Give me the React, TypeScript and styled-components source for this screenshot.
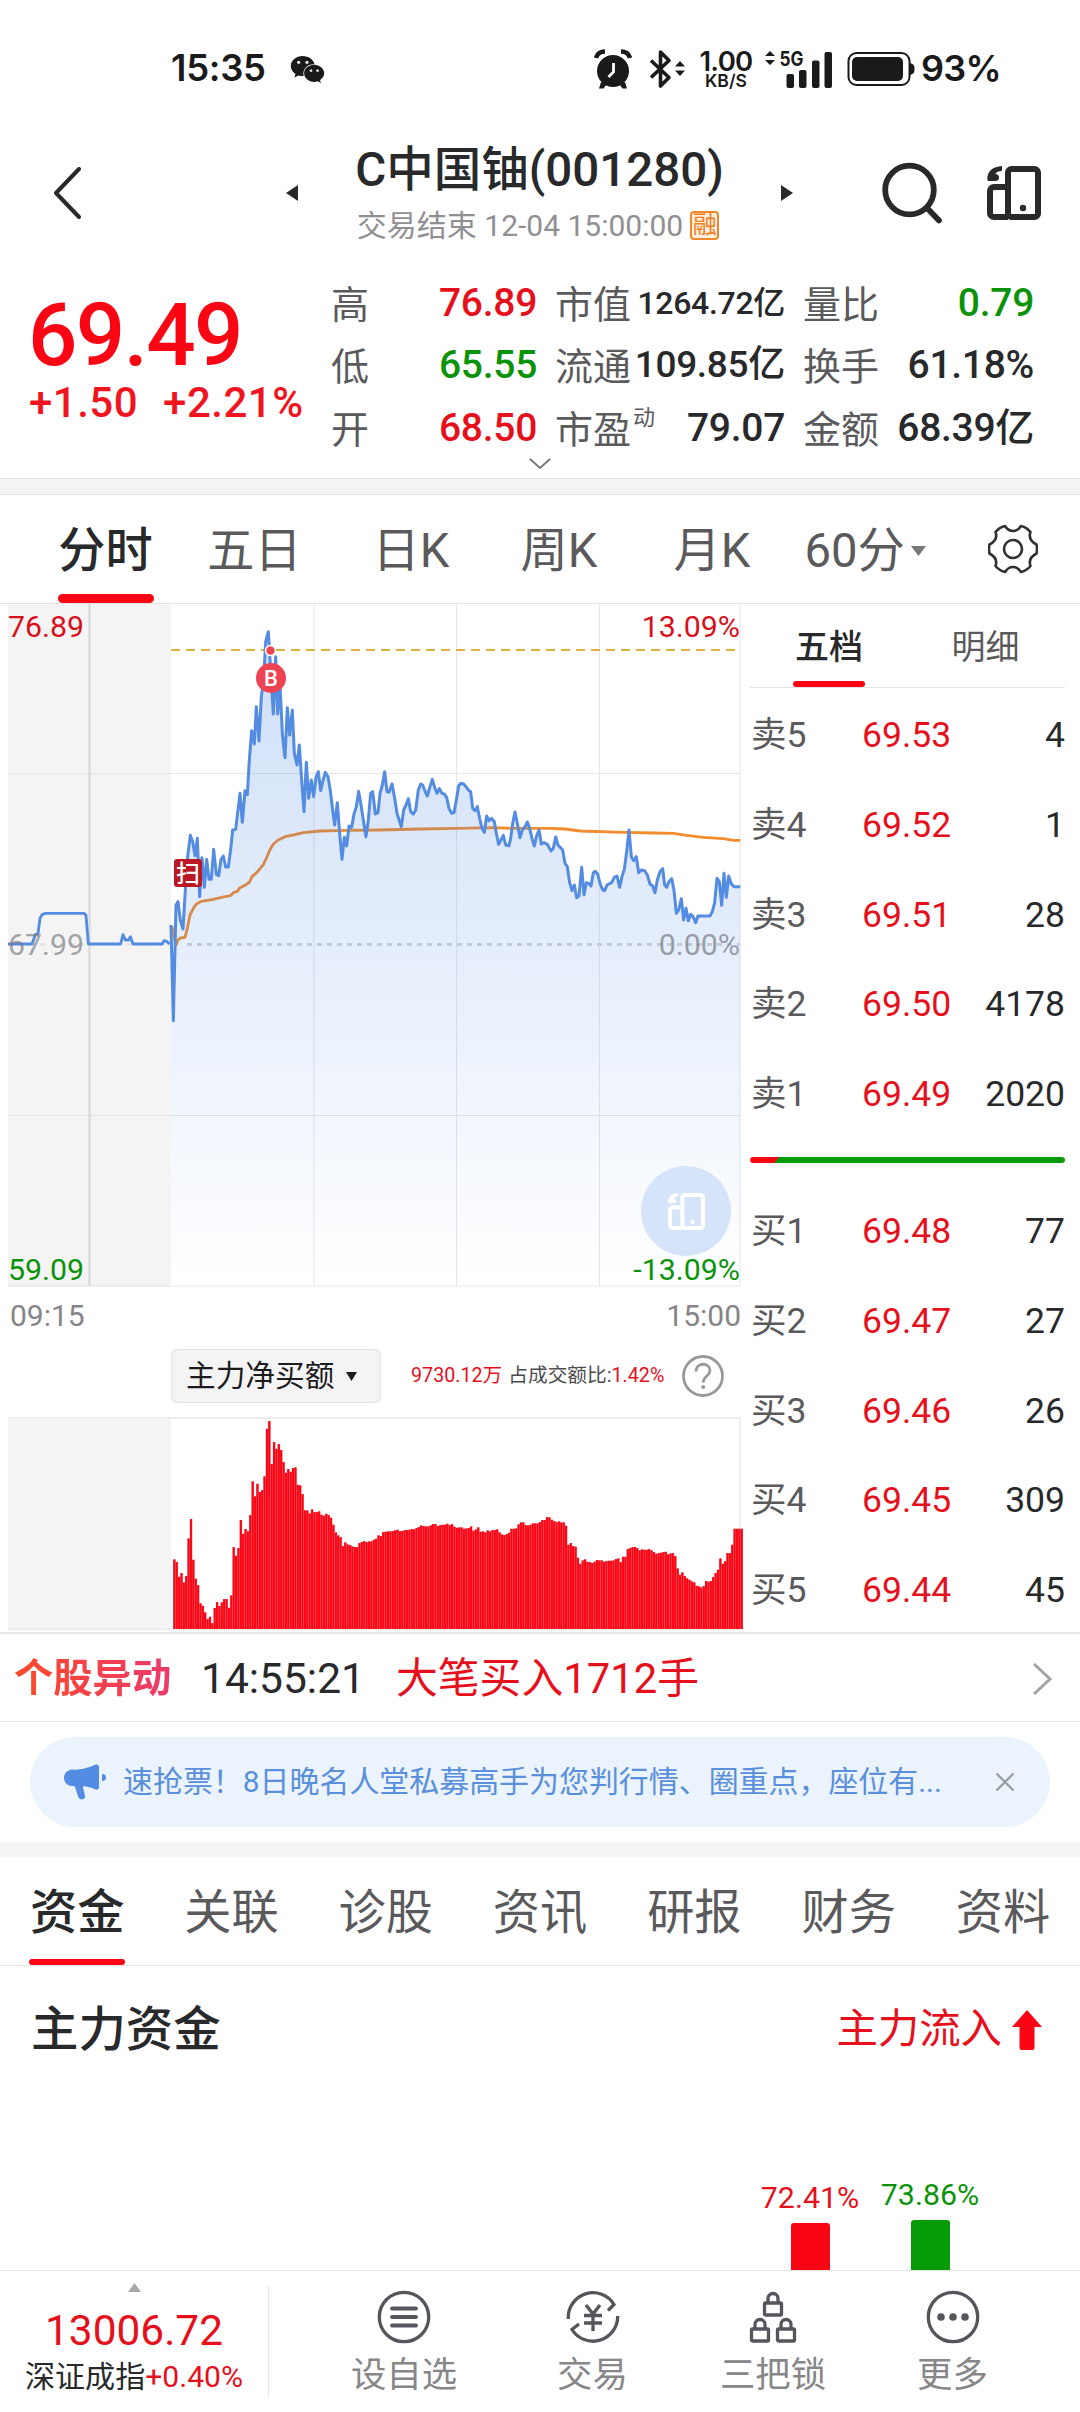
import React from 'react';
import styled, { createGlobalStyle } from 'styled-components';
import { FaWeixin } from 'react-icons/fa';

const RED = '#e60f1c';
const HOT = '#fa0513';
const GREEN = '#0a930a';
const INK = '#28292b';
const GRAY = '#5a5a5c';
const LINE = '#e4e4e6';

const GlobalStyle = createGlobalStyle`
  * { box-sizing: border-box; }
  body { margin: 0; background: #fff; }
`;

const Page = styled.main`
  display: flex;
  flex-direction: column;
  width: 1080px;
  height: 2412px;
  overflow: hidden;
  background: #fff;
  color: ${INK};
  font-family: Roboto, 'Noto Sans CJK SC', sans-serif;
  line-height: 1.2;
  white-space: nowrap;
  svg { display: block; flex: none; }
`;

/* ---------- status bar ---------- */
const StatusBar = styled.header`
  display: flex;
  align-items: center;
  height: 138px;
  padding: 0 80px 0 171px;
  color: #1a1a1a;
  font-family: Inter, Roboto, sans-serif;
  font-weight: 600;
`;
const Clock = styled.span`
  width: 119px;
  font-size: 36.5px;
  letter-spacing: -0.3px;
`;
const StatusIcons = styled.div`
  display: flex;
  align-items: center;
  margin-left: auto;
`;
const NetSpeed = styled.div`
  display: flex;
  flex-direction: column;
  align-items: center;
  width: 56px;
  margin: 0 11px 0 12px;
`;
const SpeedValue = styled.span`
  font-size: 27.5px;
  line-height: 22px;
  letter-spacing: -0.7px;
`;
const SpeedUnit = styled.span`
  font-size: 17.5px;
  line-height: 17px;
  letter-spacing: 0;
`;
const BatteryText = styled.span`
  margin-left: 6px;
  width: 79px;
  font-size: 36px;
  letter-spacing: -0.7px;
`;
const Spacer = styled.span<{ $w: number }>`
  width: ${p => p.$w}px;
`;

/* ---------- title bar ---------- */
const TitleBar = styled.div`
  display: flex;
  align-items: center;
  height: 123px;
  padding: 0 39px 13px 52px;
`;
const TitleBlock = styled.div`
  display: flex;
  flex-direction: column;
  align-items: center;
  width: 483px;
  padding-top: 8px;
`;
const StockName = styled.h1`
  margin: 0;
  font-size: 47.5px;
  line-height: 56px;
  font-weight: 500;
`;
const SubTitle = styled.div`
  display: flex;
  align-items: center;
  gap: 7px;
  height: 54px;
  margin-left: -3px;
  padding-top: 1px;
  color: #909093;
  font-size: 30px;
`;
const MarginTag = styled.span`
  width: 29px;
  height: 29px;
  border: 2px solid #f0872b;
  border-radius: 4px;
  background: #fff0e0;
  color: #ee7d1c;
  font-size: 24px;
  line-height: 24px;
  display: flex;
  justify-content: center;
`;
const TitleActions = styled.div`
  display: flex;
  align-items: center;
  gap: 44px;
  margin-left: auto;
`;

/* ---------- quote summary ---------- */
const Quote = styled.section`
  display: flex;
  position: relative;
  height: 217px;
  padding: 11px 0 0 31px;
`;
const PriceBlock = styled.div`
  width: 300px;
  color: ${HOT};
`;
const Price = styled.div`
  margin: 12px 0 0 -3px;
  font-size: 87px;
  line-height: 102px;
  font-weight: 500;
  letter-spacing: -1.6px;
`;
const Changes = styled.div`
  display: flex;
  gap: 25px;
  margin-left: -2px;
  color: #f01420;
  font-size: 42px;
  font-weight: 500;
  line-height: 33px;
  letter-spacing: 0.5px;
`;
const StatGrid = styled.div`
  display: grid;
  grid-template-columns: 206px 230px 231px;
  grid-auto-rows: 62.3px;
  column-gap: 18px;
`;
const Stat = styled.div`
  display: flex;
  align-items: center;
  justify-content: space-between;
`;
const StatLabel = styled.span`
  display: flex;
  padding-top: 4px;
  color: ${GRAY};
  font-size: 38px;
  line-height: 54px;
`;
const Sup = styled.sup`
  margin-left: 2px;
  font-size: 22px;
  line-height: 30px;
  vertical-align: top;
`;
const StatValue = styled.span<{ $tone?: string; $size?: number }>`
  color: ${p => p.$tone || INK};
  font-size: ${p => p.$size || 39}px;
  font-weight: 500;
  letter-spacing: -0.3px;
  line-height: 54px;
`;
const ExpandMark = styled.div`
  position: absolute;
  left: 529px;
  top: 197px;
`;
const Divider = styled.div<{ $h: number; $lined?: boolean }>`
  flex: none;
  height: ${p => p.$h}px;
  background: #f4f4f4;
  border: solid ${LINE};
  border-width: ${p => (p.$lined ? '1px 0' : '0')};
`;

/* ---------- period tabs ---------- */
const PeriodTabs = styled.nav`
  display: grid;
  grid-template-columns: 151px 147px 166px 130px 176px 130px 1fr;
  height: 109px;
  padding-left: 30px;
  border-bottom: 1px solid ${LINE};
`;
const Tab = styled.a<{ $active?: boolean }>`
  display: flex;
  flex-direction: column;
  align-items: center;
  justify-content: space-between;
  color: ${p => (p.$active ? INK : GRAY)};
  font-weight: ${p => (p.$active ? 500 : 400)};
  font-size: 47.2px;
  height: 108px;
`;
const TabText = styled.span`
  display: flex;
  align-items: center;
  height: 99px;
  line-height: 56px;
  padding-top: 13px;
  gap: 6px;
`;
const Underline = styled.i<{ $w: number; $h: number }>`
  flex: none;
  width: ${p => p.$w}px;
  height: ${p => p.$h}px;
  border-radius: ${p => p.$h / 2}px;
  background: ${HOT};
`;
const GearCell = styled.div`
  display: flex;
  justify-content: center;
  padding: 29px 0 0 15px;
`;

/* ---------- chart & order book ---------- */
const Market = styled.section`
  display: flex;
  height: 1028px;
  padding-right: 15px;
`;
const ChartColumn = styled.div`
  flex: none;
  width: 750px;
  padding-left: 8px;
`;
const ChartBox = styled.div`
  position: relative;
  width: 735px;
  height: 683px;
`;
const AxisLabel = styled.span<{ $tone: string; $top: number; $right?: boolean }>`
  position: absolute;
  top: ${p => p.$top}px;
  ${p => (p.$right ? 'right: 3px;' : 'left: 0;')}
  color: ${p => p.$tone};
  font-size: 30.3px;
  line-height: 36px;
`;
const FloatButton = styled.button`
  position: absolute;
  left: 633px;
  top: 562px;
  display: grid;
  place-items: center;
  width: 90px;
  height: 90px;
  padding: 0;
  border: 0;
  border-radius: 50%;
  background: #d6e4f9;
`;
const TimeAxis = styled.div`
  display: flex;
  justify-content: space-between;
  width: 734px;
  height: 62px;
  padding: 0 1px 0 2px;
  color: #858587;
  font-size: 30px;
  line-height: 57px;
`;
const IndicatorRow = styled.div`
  display: flex;
  align-items: center;
  height: 54px;
  padding-left: 163px;
  font-size: 19.7px;
`;
const IndicatorSelect = styled.button`
  display: flex;
  align-items: center;
  gap: 12px;
  width: 210px;
  height: 54px;
  padding: 0 0 0 14px;
  border: 1.5px solid #e2e2e4;
  border-radius: 6px;
  background: #f4f4f4;
  color: #1c1c1e;
  font: inherit;
  font-size: 29.7px;
`;
const IndicatorText = styled.span<{ $red?: boolean; $ml?: number }>`
  margin-left: ${p => p.$ml || 0}px;
  color: ${p => (p.$red ? RED : '#4c4c4e')};
`;
const HelpIcon = styled.span`
  display: flex;
  margin-left: 18px;
`;
const FlowBox = styled.div`
  margin-top: 14px;
`;

const Book = styled.div`
  width: 315px;
`;
const BookTabs = styled.div`
  display: flex;
  height: 84px;
  padding: 0 46px 0 43px;
  justify-content: space-between;
  border-bottom: 1px solid ${LINE};
`;
const BookTab = styled.a<{ $active?: boolean }>`
  display: flex;
  flex-direction: column;
  align-items: center;
  justify-content: space-between;
  width: ${p => (p.$active ? 72 : 67)}px;
  color: ${p => (p.$active ? INK : GRAY)};
  font-size: 34px;
  font-weight: ${p => (p.$active ? 500 : 400)};
  line-height: 86px;
`;
const BookTabText = styled.span`
  height: 77px;
`;
const BookRow = styled.div`
  display: grid;
  grid-template-columns: 112px 100px 1fr;
  height: 89.8px;
  font-size: 35.5px;
  line-height: 94px;
`;
const Level = styled.span`
  padding-left: 1px;
  color: ${GRAY};
`;
const BookPrice = styled.span`
  color: ${RED};
`;
const Volume = styled.span`
  text-align: right;
`;
const Ratio = styled.div`
  display: flex;
  height: 6px;
  margin: 20px 0 21px;
  border-radius: 3px;
  overflow: hidden;
  background: linear-gradient(125deg, ${HOT} 0 23px, #069a06 24px);
`;

/* ---------- alert, notice ---------- */
const AlertRow = styled.section`
  display: flex;
  align-items: center;
  height: 90px;
  padding: 2px 28px 0 14px;
  border-top: 2px solid ${LINE};
  border-bottom: 1px solid ${LINE};
  line-height: 50px;
`;
const AlertTag = styled.strong`
  width: 187px;
  background: linear-gradient(90deg, #fc4a28, #ec3a6c 156px);
  background-clip: text;
  -webkit-background-clip: text;
  color: transparent;
  font-size: 39.3px;
  font-weight: 700;
`;
const AlertTime = styled.span`
  width: 195px;
  font-size: 42.5px;
`;
const AlertText = styled.span`
  flex: 1;
  color: ${RED};
  font-size: 41.8px;
`;
const Notice = styled.div`
  display: flex;
  align-items: center;
  height: 90px;
  margin: 15px 30px;
  padding: 0 35px 0 33px;
  border-radius: 45px;
  background: #ebf3fc;
  color: #5a8fdc;
  font-size: 29.95px;
`;
const NoticeText = styled.span`
  flex: 1;
  margin-left: 16px;
`;

/* ---------- detail tabs & funds ---------- */
const DetailTabs = styled.nav`
  display: grid;
  grid-template-columns: repeat(7, 154.3px);
  height: 109px;
  border-bottom: 1px solid ${LINE};
`;
const DetailTab = styled.a<{ $active?: boolean }>`
  display: flex;
  flex-direction: column;
  align-items: center;
  justify-content: space-between;
  color: ${p => (p.$active ? INK : GRAY)};
  font-size: 47.2px;
  font-weight: ${p => (p.$active ? 500 : 400)};
  line-height: 113px;
`;
const DetailText = styled.span`
  height: 101px;
`;
const Funds = styled.section`
  display: flex;
  flex-direction: column;
  justify-content: space-between;
  height: 304px;
  padding: 29px 38px 0 31px;
`;
const FundsHead = styled.div`
  display: flex;
  align-items: center;
  justify-content: space-between;
  height: 70px;
`;
const FundsTitle = styled.h2`
  margin: 0;
  font-size: 47.4px;
  font-weight: 500;
`;
const FlowIn = styled.span`
  display: flex;
  align-items: center;
  gap: 10px;
  color: ${RED};
  font-size: 41.4px;
`;
const FundBars = styled.div`
  display: flex;
  align-items: flex-end;
  justify-content: flex-end;
  gap: 20px;
  padding-right: 62px;
`;
const FundItem = styled.div<{ $tone: string }>`
  display: flex;
  flex-direction: column;
  align-items: center;
  gap: 7px;
  width: 100px;
  color: ${p => p.$tone};
  font-size: 30.3px;
  line-height: 36px;
`;
const FundBar = styled.i<{ $tone: string; $h: number }>`
  width: 39px;
  height: ${p => p.$h}px;
  border-radius: 3px 3px 0 0;
  background: ${p => p.$tone};
`;

/* ---------- bottom bar ---------- */
const BottomBar = styled.footer`
  display: flex;
  height: 142px;
  border-top: 1px solid ${LINE};
`;
const IndexCell = styled.div`
  display: flex;
  flex-direction: column;
  align-items: center;
  width: 269px;
  height: 111px;
  margin-top: 15px;
  border-right: 1px solid ${LINE};
  svg { margin-top: -3px; }
`;
const IndexValue = styled.span`
  margin-top: 14px;
  color: ${RED};
  font-size: 42.4px;
  line-height: 50px;
`;
const IndexName = styled.span`
  font-size: 30.1px;
  line-height: 42px;
`;
const Accent = styled.em`
  color: ${RED};
  font-style: normal;
`;
const Actions = styled.div`
  display: grid;
  grid-template-columns: 190px 187px 174px 185px;
  padding: 19px 0 0 40px;
`;
const Action = styled.a`
  display: flex;
  flex-direction: column;
  align-items: center;
  gap: 8px;
  color: #87878a;
  font-size: 35.4px;
  line-height: 46px;
`;

/* ---------- data ---------- */
// Minute prices, plotted in units of a third of a pixel.
const auction =
  '24,1062 96,1062 106,1034 114,1030 120,985 126,974 136,970 252,970 258,976 265,1062 362,1062 369,1034 376,1050 386,1050 391,1040 399,1062 487,1062 492,1052 500,1054 509,1062';
const prices =
  '513,1005 520,1292 528,946 534,935 541,990 549,1017 556,900 563,800 571,736 578,755 585,797 592,745 599,920 606,803 613,892 620,808 627,868 634,868 641,778 649,853 656,857 663,808 670,798 677,831 685,831 692,778 698,720 707,718 714,660 720,610 727,697 735,602 742,614 748,510 755,422 763,462 769,350 777,453 784,320 791,270 797,155 805,125 812,240 820,372 827,200 833,372 840,280 847,430 855,503 862,353 869,435 877,360 883,490 891,525 898,465 905,570 912,665 919,517 926,625 934,570 941,620 948,562 955,545 962,602 969,572 976,547 984,560 991,602 998,660 1004,705 1012,638 1019,730 1026,808 1033,742 1040,768 1047,708 1055,712 1062,672 1069,650 1076,604 1083,645 1090,690 1098,740 1105,690 1112,610 1118,605 1126,672 1134,668 1140,610 1147,585 1154,545 1161,605 1167,607 1176,582 1184,625 1191,670 1204,710 1211,660 1218,645 1225,626 1232,665 1240,672 1247,660 1255,600 1262,582 1268,585 1275,603 1282,618 1290,590 1297,568 1304,592 1311,610 1318,596 1326,610 1333,612 1340,622 1347,655 1355,670 1362,668 1369,630 1376,587 1383,580 1391,582 1398,590 1405,600 1412,605 1418,655 1425,662 1432,650 1439,685 1446,715 1453,727 1460,678 1467,692 1475,685 1483,695 1489,730 1496,763 1503,750 1510,736 1517,765 1527,767 1532,745 1538,700 1545,666 1553,705 1560,743 1567,720 1574,712 1582,696 1589,715 1596,745 1603,768 1610,737 1617,720 1624,762 1632,758 1642,763 1653,783 1660,775 1667,741 1674,765 1688,780 1695,820 1702,830 1709,878 1716,902 1723,885 1730,923 1737,918 1745,832 1752,915 1759,878 1766,880 1773,888 1780,848 1786,844 1793,852 1800,880 1807,898 1814,902 1821,885 1835,878 1843,862 1851,858 1859,892 1866,860 1873,838 1880,785 1887,720 1894,800 1901,812 1909,800 1916,848 1924,840 1934,842 1942,855 1950,882 1958,888 1965,908 1972,870 1980,845 1988,836 1994,885 2000,892 2007,875 2015,866 2022,900 2029,970 2036,960 2044,926 2051,990 2058,955 2065,992 2072,973 2079,980 2087,998 2094,978 2130,978 2137,965 2144,938 2151,865 2158,875 2165,946 2172,850 2179,922 2186,858 2194,882 2202,890 2221,890';
const average =
  '516,1010 528,1066 534,1050 541,1044 555,1042 562,1015 570,975 580,955 590,941 605,934 640,928 665,922 692,917 700,908 712,904 720,893 738,884 749,876 756,860 770,848 790,824 800,803 808,783 820,762 835,750 855,740 880,735 910,728 960,723 1040,721 1140,720 1260,717 1370,715 1480,713 1540,715 1650,715 1695,717 1740,723 1870,727 1960,729 2020,730 2060,736 2110,742 2170,746 2200,751 2221,751';

// Upper edge of each minute's net inflow bar, same unit, baseline at 717.
const inflow = [
  508, 516, 560, 549, 577, 558, 445, 387, 509, 566, 585, 640, 647, 667, 687, 680, 699, 654, 636, 648,
  637, 627, 627, 653, 616, 471, 497, 474, 390, 431, 417, 424, 375, 274, 319, 281, 306, 300, 259, 116,
  93, 222, 156, 176, 162, 180, 216, 248, 237, 245, 234, 232, 284, 286, 312, 361, 361, 370, 358, 366,
  366, 364, 374, 377, 371, 375, 383, 404, 427, 436, 441, 468, 457, 463, 465, 469, 471, 471, 459, 456,
  453, 456, 454, 454, 449, 446, 436, 438, 426, 425, 424, 424, 423, 421, 419, 423, 423, 420, 420, 419,
  417, 418, 414, 411, 406, 408, 409, 409, 406, 402, 402, 408, 405, 404, 404, 401, 405, 402, 410, 413,
  412, 412, 416, 415, 414, 409, 422, 418, 412, 425, 424, 427, 421, 424, 420, 420, 418, 427, 433, 435,
  432, 428, 416, 416, 415, 403, 397, 397, 405, 406, 404, 400, 400, 400, 396, 390, 390, 381, 382, 389,
  393, 396, 394, 397, 397, 407, 464, 459, 468, 470, 503, 521, 511, 508, 515, 516, 519, 515, 510, 511,
  511, 515, 513, 512, 512, 511, 507, 505, 516, 500, 500, 477, 474, 471, 471, 474, 481, 478, 479, 479,
  477, 481, 486, 491, 489, 488, 486, 485, 493, 490, 489, 498, 535, 554, 547, 558, 565, 569, 574, 577,
  587, 589, 592, 588, 573, 575, 573, 561, 549, 539, 505, 521, 513, 489, 489, 464, 416, 416, 416, 416,
];

const sells = [['5', '69.53', '4'], ['4', '69.52', '1'], ['3', '69.51', '28'], ['2', '69.50', '4178'], ['1', '69.49', '2020']];
const buys = [['1', '69.48', '77'], ['2', '69.47', '27'], ['3', '69.46', '26'], ['4', '69.45', '309'], ['5', '69.44', '45']];
const details = ['资金', '关联', '诊股', '资讯', '研报', '财务', '资料'];

/* ---------- drawings ---------- */
const DeviceIcon = ({ size, color }: { size: number; color: string }) => (
  <svg width={size} height={size} viewBox="0 0 54 54" fill="none" stroke={color} strokeWidth="6">
    <rect x="21" y="3" width="30" height="48" rx="3.500" />
    <path d="M21 21H7a4 4 0 0 0-4 4v22a4 4 0 0 0 4 4h14" />
    <path d="M15 0C6 .5 0 5 .3 13.500c.2 1 .9 1.500 2 1.500H9c4.500-.5 4-7-.8-7C9.500 6 11.500 5.300 15 4.800z" fill={color} stroke="none" />
    <circle cx="36" cy="42" r="3.200" fill={color} stroke="none" />
  </svg>
);

const StatusGlyphs = () => (
  <>
    <svg width="38" height="40" viewBox="0 0 38 40" fill="#1a1a1a">
      <path d="M7 33 5 39.500h4.500l3-4M31 33l2 6.500h-4.500l-3-4" />
      <circle cx="19" cy="22" r="16" />
      <path d="M2 9C3 5 6 2.500 11 2.500M36 9C35 5 32 2.500 27 2.500" stroke="#1a1a1a" strokeWidth="4.500" fill="none" />
      <path d="M19.500 14v9l-5 5" stroke="#fff" strokeWidth="2.800" fill="none" />
    </svg>
    <Spacer $w={17} />
    <svg width="37" height="40" viewBox="0 0 37 40" fill="none">
      <path d="M2 11.500 20 28.500 11.500 37V3L20 11.500 2 28.500" stroke="#1a1a1a" strokeWidth="3.600" strokeLinejoin="round" />
      <path d="m26 17.500 5-5.500 5 5.500zM26 21.500l5 5.500 5-5.500z" fill="#1a1a1a" />
    </svg>
  </>
);

const SignalGlyph = () => (
  <svg width="67" height="48" viewBox="0 -4 67 48" fill="#1a1a1a">
    <path d="m0 7 5-5 5 5zM0 11l5 5 5-5z" />
    <text x="14.500" y="17" fontSize="20" fontWeight="700" textLength="24" lengthAdjust="spacingAndGlyphs">5G</text>
    <rect x="21.500" y="25" width="7.500" height="14" rx="2" />
    <rect x="34" y="21" width="7.500" height="18" rx="2" />
    <rect x="47" y="11.500" width="7.500" height="27.500" rx="2" />
    <rect x="59.500" y="3" width="7.500" height="36" rx="2" />
  </svg>
);

const Battery = () => (
  <svg width="68" height="36" viewBox="0 0 68 36">
    <rect x="1.500" y="2" width="61" height="32" rx="8" fill="none" stroke="#1a1a1a" strokeWidth="2" />
    <rect x="5" y="6" width="51" height="24" rx="5" fill="#1a1a1a" />
    <path d="M63 12c4 1 4.500 3 4.500 6s-.5 5-4.500 6z" fill="#1a1a1a" />
  </svg>
);

const Triangle = ({ d, w, h, fill }: { d: string; w: number; h: number; fill: string }) => (
  <svg width={w} height={h} viewBox={`0 0 ${w} ${h}`}><path d={d} fill={fill} /></svg>
);

const PriceChart = () => (
  <svg width="735" height="683" viewBox="8 604 735 683">
    <defs>
      <linearGradient id="area" gradientUnits="userSpaceOnUse" x1="0" y1="120" x2="0" y2="2085">
        <stop offset="0" stopColor="#4a86e2" stopOpacity=".27" />
        <stop offset=".35" stopColor="#4a86e2" stopOpacity=".18" />
        <stop offset=".68" stopColor="#4a86e2" stopOpacity=".09" />
        <stop offset="1" stopColor="#4a86e2" stopOpacity="0" />
      </linearGradient>
    </defs>
    <rect x="8" y="604" width="163" height="683" fill="#f4f4f4" />
    <path d="M8 773.500H740M8 1115.500H740M8 1286H740M314 604V1286M456.500 604V1286M599.500 604V1286M740 604V1286" stroke="#e6e6e9" fill="none" />
    <path d="M89.500 604V1286" stroke="#d6d6d9" strokeWidth="2" />
    <path d="M171 650H740" stroke="#e0b23c" strokeWidth="2" strokeDasharray="9 6" />
    <path d="M187 944.500H740" stroke="#d3d6de" strokeWidth="3" strokeDasharray="5 5" />
    <path d="M30 944.500H84M127 944.500H171" stroke="#e6e6e8" strokeWidth="3" strokeDasharray="5 5" />
    <g transform="translate(0 590) scale(.33333)" fill="none" strokeLinejoin="round">
      <polyline points={average} stroke="#f28c2c" strokeWidth="8.500" />
      <polygon points={`513,2085 ${prices} 2221,2085`} fill="url(#area)" />
      <polyline points={auction} stroke="#538ce0" strokeWidth="8.500" />
      <polyline points={prices} stroke="#538ce0" strokeWidth="9" />
    </g>
    <circle cx="270.500" cy="650.500" r="5" fill="#ee4454" stroke="#fff" strokeWidth="1.500" />
    <circle cx="271" cy="678" r="15" fill="#ee4352" />
    <text x="271" y="686" fontSize="22" fill="#fff" textAnchor="middle" fontWeight="500">B</text>
    <rect x="174" y="859" width="28" height="28" rx="3" fill="#b91824" />
    <text x="188" y="881.500" fontSize="24" fill="#fff" textAnchor="middle" fontWeight="500">扫</text>
  </svg>
);

const FlowChart = () => (
  <svg width="735" height="215" viewBox="8 1417 735 215">
    <rect x="8" y="1417" width="163" height="213" fill="#f4f4f4" />
    <path d="M8 1418H740V1629.500H8" fill="none" stroke="#eeeef0" strokeWidth="2" />
    {inflow.map((t, i) => {
      const h = (717 - t) / 3;
      const x = 173.2 + i * 2.374;
      return (
        <React.Fragment key={i}>
          <rect x={x} y={1629 - h} width="2.400" height={h} fill="#f4404b" />
          <rect x={x + 0.2} y={1629.3 - h} width="1.850" height={h - 0.3} fill="#fc0413" />
        </React.Fragment>
      );
    })}
  </svg>
);

const ring = (
  <circle cx="27" cy="27" r="24.700" />
);
const ActionIcon = ({ children }: { children: React.ReactNode }) => (
  <svg width="54" height="54" viewBox="0 0 54 54" fill="none" stroke="#55565c" strokeWidth="3.300">{children}</svg>
);
const Lock = ({ x, y }: { x: number; y: number }) => (
  <g transform={`translate(${x} ${y})`}>
    <rect x="1.500" y="11" width="17" height="12" rx="1" />
    <path d="M5 11V6.500a5 5 0 0 1 10 0V11" />
  </g>
);

export default function App() {
  return (
    <Page>
      <GlobalStyle />
      <StatusBar>
        <Clock>15:35</Clock>
        <FaWeixin size={35} />
        <StatusIcons>
          <StatusGlyphs />
          <NetSpeed>
            <SpeedValue>1.00</SpeedValue>
            <SpeedUnit>KB/S</SpeedUnit>
          </NetSpeed>
          <SignalGlyph />
          <Spacer $w={15} />
          <Battery />
          <BatteryText>93%</BatteryText>
        </StatusIcons>
      </StatusBar>

      <TitleBar>
        <svg width="234" height="52" viewBox="0 0 234 52" fill="none">
          <path d="M27 2 4 26l23 24" stroke={INK} strokeWidth="4" strokeLinecap="round" strokeLinejoin="round" />
        </svg>
        <Triangle w={12} h={16} d="M12 0v16L0 8z" fill={INK} />
        <TitleBlock>
          <StockName>C中国铀(001280)</StockName>
          <SubTitle>
            <span>交易结束 12-04 15:00:00</span>
            <MarginTag>融</MarginTag>
          </SubTitle>
        </TitleBlock>
        <Triangle w={12} h={16} d="M0 0v16l12-8z" fill={INK} />
        <TitleActions>
          <svg width="62" height="62" viewBox="0 0 62 62" fill="none" stroke={INK} strokeWidth="5.800" strokeLinecap="round">
            <circle cx="28.500" cy="28" r="24.300" />
            <path d="m47 47 11 11.500" />
          </svg>
          <DeviceIcon size={54} color={INK} />
        </TitleActions>
      </TitleBar>

      <Quote>
        <PriceBlock>
          <Price>69.49</Price>
          <Changes><span>+1.50</span><span>+2.21%</span></Changes>
        </PriceBlock>
        <StatGrid>
          <Stat><StatLabel>高</StatLabel><StatValue $tone={RED}>76.89</StatValue></Stat>
          <Stat><StatLabel>市值</StatLabel><StatValue $size={32}>1264.72亿</StatValue></Stat>
          <Stat><StatLabel>量比</StatLabel><StatValue $tone={GREEN}>0.79</StatValue></Stat>
          <Stat><StatLabel>低</StatLabel><StatValue $tone={GREEN}>65.55</StatValue></Stat>
          <Stat><StatLabel>流通</StatLabel><StatValue $size={37}>109.85亿</StatValue></Stat>
          <Stat><StatLabel>换手</StatLabel><StatValue>61.18%</StatValue></Stat>
          <Stat><StatLabel>开</StatLabel><StatValue $tone={RED}>68.50</StatValue></Stat>
          <Stat><StatLabel>市盈<Sup>动</Sup></StatLabel><StatValue>79.07</StatValue></Stat>
          <Stat><StatLabel>金额</StatLabel><StatValue>68.39亿</StatValue></Stat>
        </StatGrid>
        <ExpandMark>
          <svg width="22" height="12" viewBox="0 0 22 12"><path d="m1 1 10 9L21 1" fill="none" stroke="#77777a" strokeWidth="2" /></svg>
        </ExpandMark>
      </Quote>

      <Divider $h={17} $lined />

      <PeriodTabs>
        <Tab $active><TabText>分时</TabText><Underline $w={96} $h={9} /></Tab>
        <Tab><TabText>五日</TabText></Tab>
        <Tab><TabText>日K</TabText></Tab>
        <Tab><TabText>周K</TabText></Tab>
        <Tab><TabText>月K</TabText></Tab>
        <Tab>
          <TabText>60分<Triangle w={15} h={10} d="M0 0h15L7.500 10z" fill="#77777a" /></TabText>
        </Tab>
        <GearCell>
          <svg width="50" height="50" viewBox="0 0 50 50" fill="none" stroke="#303133" strokeWidth="2.600" strokeLinejoin="round">
            <path d="M17 2c2.500 4 5 5 8 5s5.500-1 8-5c4 1 7 3 9.500 6-1.500 4-.5 9 6 12.500.7 3 .7 6 0 9-6.500 3.500-7.500 8.500-6 12.500-2.500 3-5.500 5-9.500 6-2.500-4-5-5-8-5s-5.500 1-8 5c-4-1-7-3-9.500-6 1.500-4 .5-9-6-12.500-.7-3-.7-6 0-9 6.500-3.500 7.500-8.500 6-12.500 2.500-3 5.500-5 9.500-6z" />
            <circle cx="25" cy="25" r="9" />
          </svg>
        </GearCell>
      </PeriodTabs>

      <Market>
        <ChartColumn>
          <ChartBox>
            <PriceChart />
            <AxisLabel $tone="#d8101c" $top={5}>76.89</AxisLabel>
            <AxisLabel $tone="#d8101c" $top={5} $right>13.09%</AxisLabel>
            <AxisLabel $tone="rgba(120,122,128,.68)" $top={323}>67.99</AxisLabel>
            <AxisLabel $tone="rgba(120,124,134,.72)" $top={323} $right>0.00%</AxisLabel>
            <AxisLabel $tone={GREEN} $top={648}>59.09</AxisLabel>
            <AxisLabel $tone={GREEN} $top={648} $right>-13.09%</AxisLabel>
            <FloatButton><DeviceIcon size={37} color="#fff" /></FloatButton>
          </ChartBox>
          <TimeAxis><span>09:15</span><span>15:00</span></TimeAxis>
          <IndicatorRow>
            <IndicatorSelect>主力净买额<Triangle w={11} h={9} d="M0 0h11L5.500 9z" fill="#1c1c1e" /></IndicatorSelect>
            <IndicatorText $red $ml={30}>9730.12万</IndicatorText>
            <IndicatorText $ml={6}>占成交额比:</IndicatorText>
            <IndicatorText $red>1.42%</IndicatorText>
            <HelpIcon>
              <svg width="42" height="42" viewBox="0 0 42 42" fill="none" stroke="#98989b" strokeWidth="2.800">
                <circle cx="21" cy="21" r="19.500" />
                <path d="M14 16.500c0-9.500 14-9.500 14-1 0 5.500-6.800 5.500-6.800 12" />
                <circle cx="21.200" cy="32" r="2" fill="#98989b" stroke="none" />
              </svg>
            </HelpIcon>
          </IndicatorRow>
          <FlowBox><FlowChart /></FlowBox>
        </ChartColumn>

        <Book>
          <BookTabs>
            <BookTab $active><BookTabText>五档</BookTabText><Underline $w={72} $h={6} /></BookTab>
            <BookTab><BookTabText>明细</BookTabText></BookTab>
          </BookTabs>
          {sells.map(([n, p, v]) => (
            <BookRow key={n}><Level>卖{n}</Level><BookPrice>{p}</BookPrice><Volume>{v}</Volume></BookRow>
          ))}
          <Ratio />
          {buys.map(([n, p, v]) => (
            <BookRow key={n}><Level>买{n}</Level><BookPrice>{p}</BookPrice><Volume>{v}</Volume></BookRow>
          ))}
        </Book>
      </Market>

      <AlertRow>
        <AlertTag>个股异动</AlertTag>
        <AlertTime>14:55:21</AlertTime>
        <AlertText>大笔买入1712手</AlertText>
        <svg width="20" height="34" viewBox="0 0 20 34"><path d="m2 2 16 15L2 32" fill="none" stroke="#a4a4a6" strokeWidth="3" /></svg>
      </AlertRow>

      <Notice>
        <svg width="44" height="36" viewBox="0 0 44 36" fill="#548ce4">
          <path d="M9 5.500C16 6.500 25 4 32 .8c2-.9 4 .2 4 2v20.600c0 1.800-2 2.700-4 1.900-4-1.700-8-2.900-12-3.300.3 4 1.500 7 2 10 .8 3.500-5 4.500-6.500 1.500-1.500-3.500-2-7-4-11.500H9C4 22 1 18 1 13.800S4 6 9 5.500zM39 10c3 0 4 1.800 4 3.500S42 17 39 17z" />
        </svg>
        <NoticeText>速抢票！8日晚名人堂私募高手为您判行情、圈重点，座位有...</NoticeText>
        <svg width="20" height="20" viewBox="0 0 20 20"><path d="m1.500 1.500 17 17m0-17-17 17" stroke="#9c9fa4" strokeWidth="2.400" /></svg>
      </Notice>

      <Divider $h={15} />

      <DetailTabs>
        {details.map((d, i) => (
          <DetailTab key={d} $active={i === 0}>
            <DetailText>{d}</DetailText>
            {i === 0 && <Underline $w={96} $h={6.5} />}
          </DetailTab>
        ))}
      </DetailTabs>

      <Funds>
        <FundsHead>
          <FundsTitle>主力资金</FundsTitle>
          <FlowIn>
            主力流入
            <svg width="30" height="40" viewBox="0 0 30 40"><path d="M15 0 30 17H22.500V38q0 2-2 2h-11q-2 0-2-2V17H0z" fill={HOT} /></svg>
          </FlowIn>
        </FundsHead>
        <FundBars>
          <FundItem $tone={RED}>72.41%<FundBar $tone={HOT} $h={47} /></FundItem>
          <FundItem $tone={GREEN}>73.86%<FundBar $tone="#079b07" $h={50} /></FundItem>
        </FundBars>
      </Funds>

      <BottomBar>
        <IndexCell>
          <Triangle w={13} h={9} d="M6.500 0 13 9H0z" fill="#a8a8aa" />
          <IndexValue>13006.72</IndexValue>
          <IndexName>深证成指<Accent>+0.40%</Accent></IndexName>
        </IndexCell>
        <Actions>
          <Action>
            <ActionIcon>{ring}<path d="M15 18.500h24M15 27h24M15 35.500h24" strokeWidth="3.800" strokeLinecap="round" /></ActionIcon>
            设自选
          </Action>
          <Action>
            <ActionIcon>
              <path d="M2.300 29A24.700 24.700 0 0 1 48 14.500L42 20.500M51.700 26A24.700 24.700 0 0 1 6 39.500L13 34" />
              <path d="m20 15 7 9 7-9M27 24v17M18 25.500h18M18 33h18" />
            </ActionIcon>
            交易
          </Action>
          <Action>
            <ActionIcon><Lock x={17} y={2} /><Lock x={4} y={28} /><Lock x={30} y={28} /></ActionIcon>
            三把锁
          </Action>
          <Action>
            <ActionIcon>
              {ring}
              <g fill="#55565c" stroke="none"><circle cx="15" cy="27" r="3.800" /><circle cx="27" cy="27" r="3.800" /><circle cx="39" cy="27" r="3.800" /></g>
            </ActionIcon>
            更多
          </Action>
        </Actions>
      </BottomBar>
    </Page>
  );
}
